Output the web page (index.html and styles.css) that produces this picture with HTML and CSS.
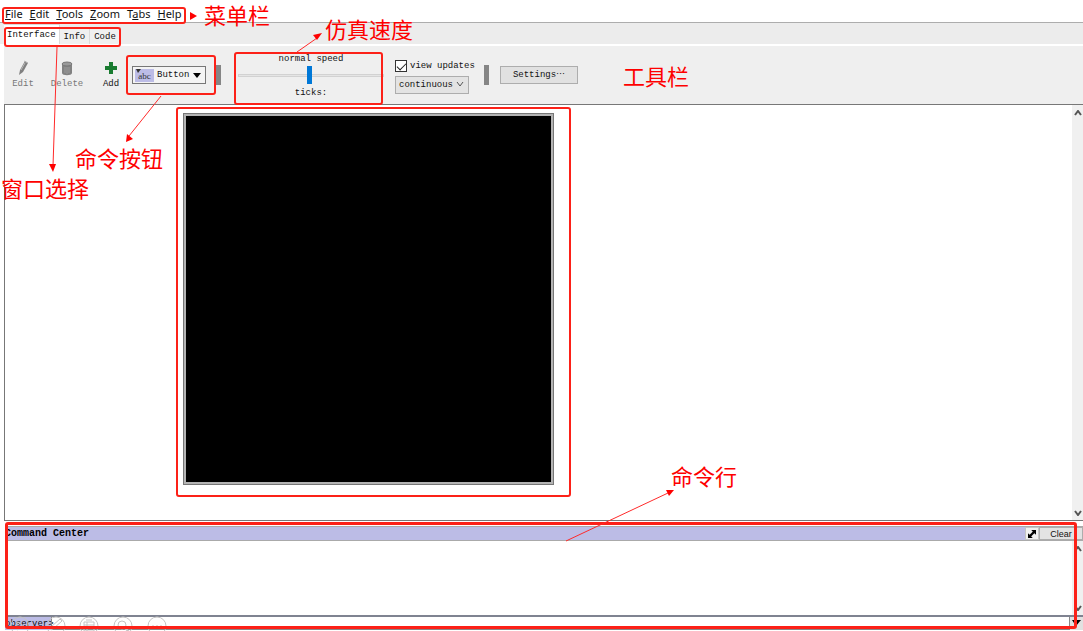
FILE: index.html
```
<!DOCTYPE html>
<html lang="zh-CN">
	<head>
		<meta charset="UTF-8" />
		<title>NetLogo 界面</title>
		<link rel="stylesheet" href="styles.css">
	</head>
	<body>
		<nav class="menubar">
			<a href="#"><u>F</u>ile</a>
			<a href="#"><u>E</u>dit</a>
			<a href="#"><u>T</u>ools</a>
			<a href="#"><u>Z</u>oom</a>
			<a href="#">T<u>a</u>bs</a>
			<a href="#"><u>H</u>elp</a>
		</nav>

		<div class="tabs">
			<button class="tab active">Interface</button>
			<button class="tab">Info</button>
			<button class="tab">Code</button>
		</div>

		<div class="toolbar">
			<button class="tool disabled">
				<svg width="14" height="16" viewBox="0 0 14 16">
					<path d="M3 15l1-5 5-9 3 2-5 9z" fill="#808080" />
					<path d="M5 10l4-7M8 1l4 2" stroke="#b8b8b8" />
				</svg>
				Edit
			</button>
			<button class="tool disabled">
				<svg width="14" height="16" viewBox="0 0 14 16">
					<path d="M2 4v9c0 3 10 3 10 0V4z" fill="#828282" />
					<ellipse cx="7" cy="4" rx="5" ry="2" fill="#999" stroke="#777" />
					<path d="M5 7v6M7 7v7M9 7v6" stroke="#9a9a9a" />
				</svg>
				Delete
			</button>
			<button class="tool">
				<svg width="14" height="16" viewBox="0 0 14 16">
					<path d="M5 2h4v4h4v4H9v4H5v-4H1V6h4z" fill="#197b30" />
				</svg>
				Add
			</button>
			<div class="widget-picker">
				<span class="abc">abc</span>
				<select class="widget-select" aria-label="Widget">
					<option>Button</option>
				</select>
				<svg class="marker" width="5" height="4" viewBox="0 0 5 4"><path d="M0 0h5L2 4z" fill="#333" /></svg>
				<svg class="arrow" width="8" height="5" viewBox="0 0 8 5"><path d="M0 0h8L4 5z" /></svg>
			</div>
			<div class="separator"></div>
			<div class="speed">
				<label for="speed">normal speed</label>
				<input type="range" id="speed" min="0" max="100" value="49" />
				<span>ticks:</span>
			</div>
			<div class="updates">
				<label class="check"><input type="checkbox" checked />view updates</label>
				<div class="mode">
					<select class="mode-select" aria-label="Update mode">
						<option>continuous</option>
					</select>
					<svg class="arrow" width="8" height="5" viewBox="0 0 8 5"><path d="M1 0l3 4 3-4" fill="none" stroke="#555" /></svg>
				</div>
			</div>
			<div class="separator"></div>
			<button class="settings">Settings⋯</button>
		</div>

		<main class="interface">
			<div class="canvas">
				<div class="view"></div>
			</div>
			<div class="scrollbar">
				<svg width="9" height="6" viewBox="0 0 9 6"><path d="M1 5l3-4 3 4" /></svg>
				<svg width="9" height="6" viewBox="0 0 9 6"><path d="M1 1l3 4 3-4" /></svg>
			</div>
		</main>

		<section class="command-center">
			<div class="cc-header">
				<span class="cc-title">Command Center</span>
				<button class="expand" aria-label="Expand">
					<svg width="8" height="8" viewBox="0 0 10 10">
						<path d="M4 0h6v6L8 4 6 6 4 4l2-2zM6 10H0V4l2 2 2-2 2 2-2 2z" />
					</svg>
				</button>
				<button class="clear">Clear</button>
			</div>
			<div class="cc-output">
				<div class="scrollbar">
					<svg width="9" height="6" viewBox="0 0 9 6"><path d="M1 5l3-4 3 4" /></svg>
					<svg width="9" height="6" viewBox="0 0 9 6"><path d="M1 1l3 4 3-4" /></svg>
				</div>
			</div>
			<div class="cc-input">
				<label for="command">observer&gt;</label>
				<input type="text" id="command" />
				<button class="history" aria-label="History">
					<svg width="9" height="6" viewBox="0 0 9 6"><path d="M0 0h9L4 6z" /></svg>
				</button>
			</div>
		</section>

		<!-- slideshow controls -->
		<svg class="pen-tools" width="180" height="16" viewBox="0 0 180 16">
			<g fill="none" stroke="#c4c4c4">
				<circle cx="20" cy="11" r="9" />
				<path d="M17 7l7 4-7 4z" />
				<circle cx="56" cy="11" r="9" />
				<path d="M51 15l1-4 8-7 2 2-8 7z" />
				<circle cx="89" cy="11" r="9" />
				<path d="M84 7h10v9H84zM84 10h10M87 7v9M86 5h6" />
				<circle cx="123" cy="11" r="9" />
				<circle cx="122" cy="10" r="4" />
				<path d="M125 13l4 4" stroke-width="2" />
				<circle cx="157" cy="11" r="9" />
				<path d="M152 11h2v1h-2zM156 11h2v1h-2zM160 11h2v1h-2z" />
			</g>
		</svg>

		<!-- annotations -->
		<div class="notes">
			<div class="box box-menu"></div>
			<div class="box box-tabs"></div>
			<div class="box box-widget"></div>
			<div class="box box-speed"></div>
			<div class="box box-view"></div>
			<div class="box box-command"></div>
			<svg class="arrows" width="760" height="560" viewBox="0 0 760 560">
				<g stroke="#ff2a2a" fill="none">
					<path d="M57 47L53 166" />
					<path d="M161 96l-32 40" />
					<path d="M297 52l20-14" />
					<path d="M566 541l102-48" />
				</g>
				<g fill="#fe0000">
					<path d="M190 12l7 4-7 4z" />
					<path d="M49 164h7l-3 8z" />
					<path d="M127 134l6 5-7 3z" />
					<path d="M313 35l9-2-5 7z" />
					<path d="M666 490l8 0-5 6z" />
				</g>
			</svg>
			<span class="note note-menu">菜单栏</span>
			<span class="note note-speed">仿真速度</span>
			<span class="note note-toolbar">工具栏</span>
			<span class="note note-widget">命令按钮</span>
			<span class="note note-tabs">窗口选择</span>
			<span class="note note-command">命令行</span>
		</div>
	</body>
</html>
```
FILE: styles.css
```
* {
	box-sizing: border-box;
}

body {
	margin: 0;
	height: 100vh;
	position: relative;
	overflow: hidden;
	display: flex;
	flex-direction: column;
	background: #fff;
	color: #111;
	font-family: 'Liberation Mono', 'Noto Sans CJK SC', monospace;
	font-size: 9px;
	line-height: 12px;
}

button,
input,
select {
	margin: 0;
	padding: 0;
	border: none;
	border-radius: 0;
	background: none;
	font: inherit;
	color: inherit;
}

select,
input[type='checkbox'],
input[type='range'] {
	appearance: none;
}

.menubar {
	display: flex;
	gap: 7px;
	height: 23px;
	padding: 6px 5px 0;
	border-bottom: 1px solid #adadad;
	font-family: 'Noto Sans', sans-serif;
	font-size: 11px;
	line-height: 15px;
}

.menubar a {
	color: #111;
	text-decoration: none;
}

.tabs {
	display: flex;
	align-items: flex-end;
	height: 23px;
	padding-left: 4px;
	background: #ececec;
	border-bottom: 2px solid #fff;
}

.tab {
	height: 17px;
	padding: 1px 4px 0;
	background: #f0f0f0;
	border: 1px solid #dadada;
	border-width: 1px 1px 0 0;
}

.tab.active {
	height: 20px;
	padding: 0 3px;
	background: #fff;
}

.toolbar {
	display: flex;
	align-items: center;
	height: 58px;
	margin-left: 4px;
	padding-left: 4px;
	background: #efefef;
}

.tool {
	display: flex;
	flex-direction: column;
	align-items: center;
	gap: 2px;
	width: 30px;
	margin-right: 14px;
}

.tool:nth-child(3) {
	margin-right: 6px;
}

.tool.disabled {
	color: #777;
}

.widget-picker {
	position: relative;
	display: flex;
	align-items: center;
	width: 74px;
	height: 18px;
	margin-right: 10px;
	padding-left: 2px;
	background: #f4f4f4;
	border: 1px solid #777;
}

.abc {
	width: 19px;
	height: 13px;
	background: #bcbce6;
	font-family: 'Liberation Serif', serif;
	line-height: 14px;
	text-align: center;
	color: #333;
}

.marker {
	position: absolute;
	left: 3px;
	top: 2px;
}

.widget-select {
	flex: 1;
	padding-left: 3px;
}

.arrow {
	position: absolute;
	right: 4px;
	pointer-events: none;
}

.separator {
	width: 5px;
	height: 20px;
	background: #858585;
}

.speed {
	display: flex;
	flex-direction: column;
	align-items: center;
	width: 146px;
	margin-left: 17px;
	padding-top: 1px;
}

.speed input {
	width: 100%;
	height: 22px;
}

.speed input::-webkit-slider-runnable-track {
	height: 3px;
	background: #e5e5e5;
	border: 1px solid #d2d2d2;
}

.speed input::-webkit-slider-thumb {
	appearance: none;
	width: 5px;
	height: 18px;
	margin-top: -9px;
	background: #0078d7;
}

.updates {
	width: 78px;
	margin: 0 11px;
	padding-top: 3px;
}

.check {
	display: flex;
	align-items: center;
	gap: 3px;
	height: 13px;
	margin-bottom: 3px;
	white-space: nowrap;
}

.check input {
	flex: none;
	width: 12px;
	height: 12px;
	background: #fff;
	border: 1px solid #333;
}

.check input:checked::before {
	content: '';
	display: block;
	width: 8px;
	height: 4px;
	margin: 2px 1px;
	border: solid #222;
	border-width: 0 0 1px 1px;
	transform: rotate(-45deg);
}

.mode {
	position: relative;
	display: flex;
	align-items: center;
	width: 74px;
	height: 18px;
	background: #e3e3e3;
	border: 1px solid #adadad;
}

.mode-select {
	width: 100%;
	padding-left: 3px;
}

.settings {
	width: 78px;
	height: 18px;
	margin-left: 11px;
	background: #e1e1e1;
	border: 1px solid #adadad;
}

.interface {
	flex: 1;
	display: flex;
	margin-left: 4px;
	border: solid #777;
	border-width: 1px 0 1px 1px;
}

.canvas {
	flex: 1;
	padding: 8px 178px;
}

.view {
	width: 371px;
	height: 372px;
	background: #000;
	border: 1px solid #777;
	box-shadow: inset 0 0 0 2px #b4b4b4;
}

.scrollbar {
	display: flex;
	flex-direction: column;
	justify-content: space-between;
	align-items: flex-end;
	width: 11px;
	padding: 5px 0 4px;
	background: #f0f0f0;
}

.scrollbar path {
	fill: none;
	stroke: #555;
	stroke-width: 2;
}

.command-center {
	margin: 5px 0 1px 5px;
}

.cc-header {
	display: flex;
	height: 15px;
	background: #bcbce6;
	border: solid #aaa;
	border-width: 1px 0;
}

.cc-title {
	flex: 1;
	font-size: 10px;
	font-weight: bold;
	line-height: 13px;
	color: #000;
}

.expand {
	display: flex;
	align-items: center;
	justify-content: center;
	width: 14px;
	background: #f0f0f0;
	border: 1px solid #c4c4c4;
}

.clear {
	width: 44px;
	background: #e3e3e3;
	border: 1px solid #adadad;
	font-family: 'Liberation Sans', sans-serif;
	line-height: 10px;
}

.cc-output {
	display: flex;
	justify-content: flex-end;
	height: 74px;
}

.cc-input {
	display: flex;
	height: 15px;
	border-top: 2px solid #7f8391;
}

.cc-input label {
	width: 46px;
	background: #bcbce6;
	line-height: 15px;
}

.cc-input input {
	flex: 1;
	border: 1px solid #888;
	border-width: 0 1px 1px;
}

.history {
	width: 13px;
	background: #e1e1e1;
}

.pen-tools {
	position: absolute;
	left: 0;
	bottom: 0;
}

.notes {
	position: absolute;
	inset: 0;
	pointer-events: none;
}

.box {
	position: absolute;
	border: 2px solid #fc2118;
	border-radius: 3px;
}

.box-menu {
	left: 2px;
	top: 7px;
	width: 184px;
	height: 17px;
}

.box-tabs {
	left: 4px;
	top: 27px;
	width: 117px;
	height: 20px;
}

.box-widget {
	left: 126px;
	top: 55px;
	width: 90px;
	height: 40px;
}

.box-speed {
	left: 234px;
	top: 52px;
	width: 149px;
	height: 53px;
}

.box-view {
	left: 176px;
	top: 107px;
	width: 395px;
	height: 390px;
}

.box-command {
	left: 5px;
	right: 6px;
	bottom: 2px;
	height: 107px;
	border-width: 3px;
}

.arrows {
	position: absolute;
	left: 0;
	top: 0;
}

.note {
	position: absolute;
	font-family: 'Noto Sans CJK SC', sans-serif;
	font-size: 22px;
	line-height: 28px;
	color: #fe0000;
	white-space: nowrap;
}

.note-menu {
	left: 204px;
	top: 0;
}

.note-speed {
	left: 325px;
	top: 14px;
}

.note-toolbar {
	left: 623px;
	top: 61px;
}

.note-widget {
	left: 75px;
	top: 143px;
}

.note-tabs {
	left: 1px;
	top: 173px;
}

.note-command {
	left: 671px;
	top: 461px;
}
```
